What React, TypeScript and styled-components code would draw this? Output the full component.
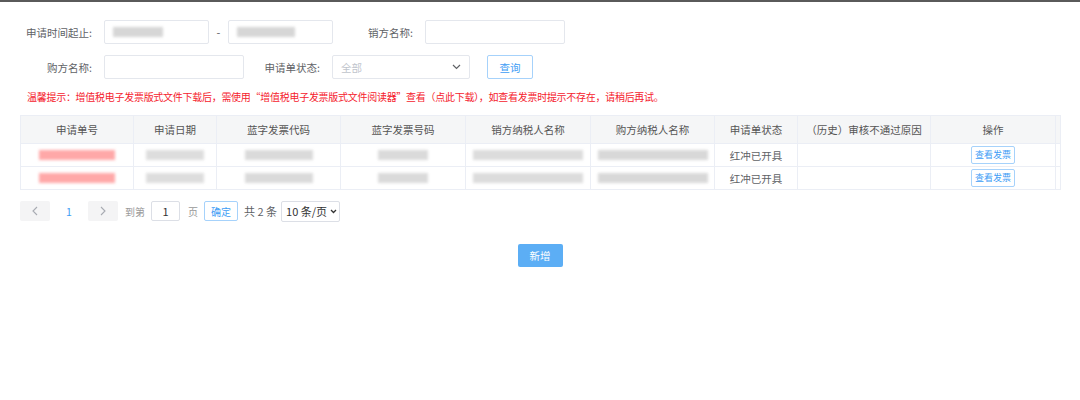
import * as React from "react";
import styled, { createGlobalStyle } from "styled-components";

const GlobalStyle = createGlobalStyle`
  body {
    margin: 0;
    background: #fff;
    font-family: "Noto Sans CJK SC", "Liberation Sans", sans-serif;
    color: #606266;
  }
`;

const SPage = styled.div`
  border-top: 2px solid #5a5a5a;
  width: 1080px;
  height: 398px;
  box-sizing: border-box;
  padding: 18px 20px 0 20px;
`;

const SFormRow = styled.div`
  display: flex;
  align-items: center;
  height: 24px;
  margin-bottom: 11px;
`;

const SLabel = styled.label<{ w: number }>`
  width: ${({ w }) => w}px;
  text-align: right;
  font-size: 10.5px;
  color: #606266;
  margin-right: 12px;
  flex-shrink: 0;
`;

const SInput = styled.div<{ w: number }>`
  width: ${({ w }) => w}px;
  height: 24px;
  box-sizing: border-box;
  border: 1px solid #e4e7ed;
  border-radius: 2px;
  display: flex;
  align-items: center;
  padding-left: 8px;
  font-size: 10.5px;
  color: #c0c4cc;
  position: relative;
`;

const SDash = styled.span`
  width: 19px;
  text-align: center;
  font-size: 11px;
  color: #606266;
`;

const SChevron = styled.svg`
  position: absolute;
  right: 8px;
  top: 8px;
`;

const SBlurText = styled.span<{ w: number; tone: string }>`
  display: inline-block;
  width: ${({ w }) => w}px;
  height: 10px;
  background: ${({ tone }) => tone};
  filter: blur(1.5px);
  opacity: 0.85;
`;

const SButton = styled.button`
  margin-left: 17px;
  width: 46px;
  height: 24px;
  border: 1px solid #a6d2fb;
  background: #fff;
  color: #3d9df5;
  border-radius: 2px;
  font-family: inherit;
  font-size: 10.5px;
  padding: 0;
`;

const STip = styled.p`
  margin: -3px 0 0 7px;
  font-size: 10px;
  letter-spacing: -0.28px;
  color: #f5222d;
  height: 20px;
  line-height: 20px;
`;

const STable = styled.table`
  margin-top: 8px;
  border-collapse: collapse;
  width: 1040px;
  table-layout: fixed;
  border: 1px solid #ebeef5;
  font-size: 10.5px;
`;

const STh = styled.th`
  height: 27px;
  background: #f5f6f7;
  color: #555;
  font-weight: normal;
  border: 1px solid #ebeef5;
  padding: 0;
`;

const STd = styled.td`
  height: 22px;
  border-bottom: 1px solid #ebeef5;
  border-left: 1px solid #ebeef5;
  text-align: center;
  color: #606266;
  padding: 0;
  overflow: hidden;
`;

const SSmallBtn = styled.span`
  display: inline-block;
  border: 1px solid #a6d2fb;
  color: #3d9df5;
  font-size: 9px;
  padding: 2px 3px;
  line-height: 12px;
  border-radius: 2px;
`;

const SPager = styled.div`
  display: flex;
  align-items: center;
  margin-top: 11px;
  height: 20px;
  font-size: 10.5px;
  color: #606266;
`;

const SPageArrow = styled.span`
  width: 30px;
  height: 20px;
  background: #f4f4f5;
  border-radius: 2px;
  display: flex;
  align-items: center;
  justify-content: center;
`;

const SPageNum = styled.span`
  width: 38px;
  text-align: center;
  color: #3d9df5;
`;

const SPagerText = styled.span<{ ml: number; muted?: boolean }>`
  margin-left: ${({ ml }) => ml}px;
  color: ${({ muted }) => (muted ? "#999" : "#606266")};
  font-size: ${({ muted }) => (muted ? "10px" : "11px")};
`;

const SPagerInput = styled.span`
  margin-left: 6px;
  width: 29px;
  height: 20px;
  box-sizing: border-box;
  border: 1px solid #dcdfe6;
  border-radius: 2px;
  display: flex;
  align-items: center;
  justify-content: center;
  font-size: 11px;
  color: #333;
`;

const SPagerConfirm = styled.span`
  margin-left: 6px;
  width: 34px;
  height: 20px;
  box-sizing: border-box;
  border: 1px solid #a6d2fb;
  border-radius: 2px;
  color: #3d9df5;
  display: flex;
  align-items: center;
  justify-content: center;
  font-size: 10px;
`;

const SPagerSelect = styled.span`
  margin-left: 4px;
  width: 59px;
  height: 21px;
  box-sizing: border-box;
  border: 1px solid #dcdfe6;
  border-radius: 2px;
  display: flex;
  align-items: center;
  padding-left: 4px;
  gap: 3px;
  font-size: 11px;
  color: #333;
`;

const SAddRow = styled.div`
  display: flex;
  justify-content: center;
  margin-top: 23px;
`;

const SAddBtn = styled.button`
  width: 45px;
  height: 23px;
  border: none;
  border-radius: 2px;
  background: #5caef5;
  color: #fff;
  font-family: inherit;
  font-size: 10.5px;
  padding: 0;
`;

const cols = [113, 83, 124, 125, 125, 124, 83, 133, 125, 5];
const heads = [
  "申请单号",
  "申请日期",
  "蓝字发票代码",
  "蓝字发票号码",
  "销方纳税人名称",
  "购方纳税人名称",
  "申请单状态",
  "（历史）审核不通过原因",
  "操作",
  "",
];

const Arrow = ({ dir }: { dir: "left" | "right" }) => (
  <svg width="8" height="10" viewBox="0 0 8 10">
    <path
      d={dir === "left" ? "M6 1 L2 5 L6 9" : "M2 1 L6 5 L2 9"}
      fill="none"
      stroke="#a8abb2"
      strokeWidth="1.1"
    />
  </svg>
);

const rows = [0, 1];

const App = () => (
  <>
    <GlobalStyle />
    <SPage>
      <SFormRow>
        <SLabel w={72}>申请时间起止:</SLabel>
        <SInput w={105}>
          <SBlurText w={50} tone="#cfcfcf" />
        </SInput>
        <SDash>-</SDash>
        <SInput w={105}>
          <SBlurText w={58} tone="#cfcfcf" />
        </SInput>
        <SLabel w={80}>销方名称:</SLabel>
        <SInput w={140} />
      </SFormRow>
      <SFormRow>
        <SLabel w={72}>购方名称:</SLabel>
        <SInput w={140} />
        <SLabel w={76}>申请单状态:</SLabel>
        <SInput w={138}>
          全部
          <SChevron width="9" height="6" viewBox="0 0 9 6">
            <path d="M1 1 L4.5 4.5 L8 1" fill="none" stroke="#606266" strokeWidth="1.2" />
          </SChevron>
        </SInput>
        <SButton>查询</SButton>
      </SFormRow>
      <STip>
        温馨提示：增值税电子发票版式文件下载后，需使用“增值税电子发票版式文件阅读器”查看（点此下载），如查看发票时提示不存在，请稍后再试。
      </STip>
      <STable>
        <colgroup>
          {cols.map((w, i) => (
            <col key={i} style={{ width: w }} />
          ))}
        </colgroup>
        <thead>
          <tr>
            {heads.map((h, i) => (
              <STh key={i}>{h}</STh>
            ))}
          </tr>
        </thead>
        <tbody>
          {rows.map((r) => (
            <tr key={r}>
              <STd>
                <SBlurText w={76} tone="#ff9a9a" />
              </STd>
              <STd>
                <SBlurText w={58} tone="#d8d8d8" />
              </STd>
              <STd>
                <SBlurText w={68} tone="#d4d4d4" />
              </STd>
              <STd>
                <SBlurText w={50} tone="#d4d4d4" />
              </STd>
              <STd>
                <SBlurText w={110} tone="#d6d6d6" />
              </STd>
              <STd>
                <SBlurText w={110} tone="#d2d2d2" />
              </STd>
              <STd>红冲已开具</STd>
              <STd />
              <STd>
                <SSmallBtn>查看发票</SSmallBtn>
              </STd>
              <STd />
            </tr>
          ))}
        </tbody>
      </STable>
      <SPager>
        <SPageArrow>
          <Arrow dir="left" />
        </SPageArrow>
        <SPageNum>1</SPageNum>
        <SPageArrow>
          <Arrow dir="right" />
        </SPageArrow>
        <SPagerText ml={7} muted>
          到第
        </SPagerText>
        <SPagerInput>1</SPagerInput>
        <SPagerText ml={8} muted>
          页
        </SPagerText>
        <SPagerConfirm>确定</SPagerConfirm>
        <SPagerText ml={6}>共 2 条</SPagerText>
        <SPagerSelect>
          10 条/页
          <svg width="7" height="5" viewBox="0 0 7 5">
            <path d="M1 1 L3.5 3.5 L6 1" fill="none" stroke="#333" strokeWidth="1.3" />
          </svg>
        </SPagerSelect>
      </SPager>
      <SAddRow>
        <SAddBtn>新增</SAddBtn>
      </SAddRow>
    </SPage>
  </>
);

export default App;
